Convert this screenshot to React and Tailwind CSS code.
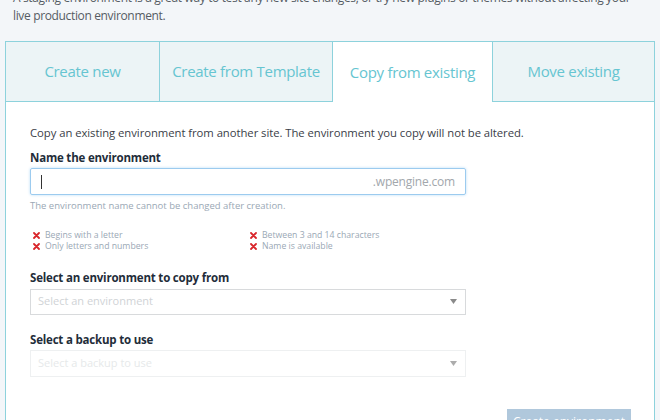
import React from "react";

const tabs = [
  { label: "Create new", w: "w-[154px]", active: false },
  { label: "Create from Template", w: "w-[173px]", active: false },
  { label: "Copy from existing", w: "w-[160px]", active: true },
  { label: "Move existing", w: "w-[161px]", active: false },
];

const rules = [
  ["Begins with a letter", "Between 3 and 14 characters"],
  ["Only letters and numbers", "Name is available"],
];

const Cross = () => (
  <svg width="7" height="7" viewBox="0 0 7 7" className="shrink-0">
    <path d="M1 1 L6 6 M6 1 L1 6" stroke="#d9262b" strokeWidth="1.8" strokeLinecap="round" />
  </svg>
);

const Caret = () => (
  <svg width="7" height="5" viewBox="0 0 7 5">
    <path d="M0 0 H7 L3.5 5 Z" fill="#8a8a8a" />
  </svg>
);

const App = () => {
  return (
    <div className="w-[660px] h-[420px] overflow-hidden bg-[#f3f6f9] font-['Open_Sans',sans-serif]">
      {/* Intro text, first line is cut by the top edge */}
      <p className="mt-[-11px] px-[13px] text-[12px] leading-[18px] text-[#555c63] tracking-[-0.35px]">
        A staging environment is a great way to test any new site changes, or try new plugins or themes without affecting your
        live production environment.
      </p>

      <div className="mx-[5px] mt-[16px] w-[650px] border border-[#8dd2dc] bg-white">
        {/* Tabs */}
        <div className="flex h-[60px]">
          {tabs.map((t, i) => (
            <div
              key={t.label}
              className={
                t.w +
                " flex items-center justify-center text-[15px] text-[#66c5d1] tracking-[-0.3px] " +
                (t.active ? "bg-white" : "bg-[#ecf4f6] border-b border-[#8dd2dc]") +
                (i < 3 ? " border-r border-r-[#8dd2dc]" : "")
              }
            >
              {t.label}
            </div>
          ))}
        </div>

        {/* Form */}
        <div className="pl-[24px] pt-[23px] pb-[40px]">
          <p className="text-[11.3px] text-[#3a4048] tracking-[-0.05px]">
            Copy an existing environment from another site. The environment you copy will not be altered.
          </p>

          <label className="block mt-[7px] text-[11.5px] font-bold text-[#1f2d3a] tracking-[-0.2px]">
            Name the environment
          </label>
          <div className="mt-[2px] flex items-center justify-between w-[436px] h-[27px] border border-[#9ccbef] rounded-[2px] shadow-[0_0_3px_#b8dcf7] px-[10px]">
            <span className="w-px h-[14px] bg-[#333]" />
            <span className="text-[12px] text-[#a2a7ac] tracking-[-0.2px]">.wpengine.com</span>
          </div>
          <p className="mt-[4px] text-[9.5px] text-[#9aa8b5]">
            The environment name cannot be changed after creation.
          </p>

          <div className="mt-[17px] flex flex-col gap-[1px]">
            {rules.map((row) => (
              <div key={row[0]} className="flex text-[8.7px] leading-[10px] text-[#9aa8b5]">
                {row.map((r) => (
                  <div key={r} className="flex items-center gap-[5px] w-[217px] pl-[3px]">
                    <Cross />
                    <span>{r}</span>
                  </div>
                ))}
              </div>
            ))}
          </div>

          <label className="block mt-[18px] text-[11.5px] font-bold text-[#1f2d3a] tracking-[-0.2px]">
            Select an environment to copy from
          </label>
          <div className="mt-[2px] flex items-center justify-between w-[436px] h-[26px] border border-[#d8dadc] px-[7px] pr-[8px]">
            <span className="text-[11px] text-[#d0d3d6]">Select an environment</span>
            <Caret />
          </div>

          <label className="block mt-[16px] text-[11.5px] font-bold text-[#1f2d3a] tracking-[-0.2px]">
            Select a backup to use
          </label>
          <div className="mt-[2px] flex items-center justify-between w-[436px] h-[27px] border border-[#e8eaec] px-[7px] pr-[8px] opacity-70">
            <span className="text-[11px] text-[#dcdfe2]">Select a backup to use</span>
            <Caret />
          </div>

          <div className="mt-[32px] flex justify-end pr-[23px]">
            <button className="w-[124px] h-[30px] pt-[4px] flex items-start justify-center bg-[#b0c8dc] text-white text-[12px]">
              Create environment
            </button>
          </div>
        </div>
      </div>
    </div>
  );
};

export default App;
